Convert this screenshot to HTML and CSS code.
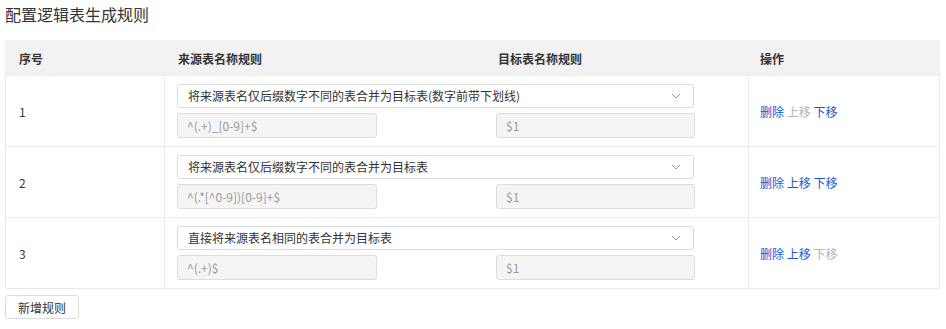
FILE: index.html
```html
<!DOCTYPE html>
<html lang="zh-CN">
<head>
<meta charset="utf-8">
<link rel="stylesheet" href="styles.css">
</head>
<body>
<div class="page">
  <h1 class="title">配置逻辑表生成规则</h1>
  <table class="rules">
    <colgroup>
      <col class="c-no"><col class="c-src"><col class="c-dst"><col class="c-op">
    </colgroup>
    <thead>
      <tr><th>序号</th><th>来源表名称规则</th><th>目标表名称规则</th><th class="h-op">操作</th></tr>
    </thead>
    <tbody>
      <tr>
        <td class="no">1</td>
        <td colspan="2" class="rule">
          <div class="select"><span>将来源表名仅后缀数字不同的表合并为目标表(数字前带下划线)</span><svg class="chev" width="10" height="6" viewBox="0 0 10 6"><path d="M1 1l4 4 4-4" fill="none" stroke="#999" stroke-width="1"/></svg></div>
          <div class="inputs"><div class="input">^(.+)_[0-9]+$</div><div class="input">$1</div></div>
        </td>
        <td class="ops"><a class="op">删除</a> <a class="op off">上移</a> <a class="op">下移</a></td>
      </tr>
      <tr>
        <td class="no">2</td>
        <td colspan="2" class="rule">
          <div class="select"><span>将来源表名仅后缀数字不同的表合并为目标表</span><svg class="chev" width="10" height="6" viewBox="0 0 10 6"><path d="M1 1l4 4 4-4" fill="none" stroke="#999" stroke-width="1"/></svg></div>
          <div class="inputs"><div class="input">^(.*[^0-9])[0-9]+$</div><div class="input">$1</div></div>
        </td>
        <td class="ops"><a class="op">删除</a> <a class="op">上移</a> <a class="op">下移</a></td>
      </tr>
      <tr>
        <td class="no">3</td>
        <td colspan="2" class="rule">
          <div class="select"><span>直接将来源表名相同的表合并为目标表</span><svg class="chev" width="10" height="6" viewBox="0 0 10 6"><path d="M1 1l4 4 4-4" fill="none" stroke="#999" stroke-width="1"/></svg></div>
          <div class="inputs"><div class="input">^(.+)$</div><div class="input">$1</div></div>
        </td>
        <td class="ops"><a class="op">删除</a> <a class="op">上移</a> <a class="op off">下移</a></td>
      </tr>
    </tbody>
  </table>
  <button class="add">新增规则</button>
</div>
</body>
</html>
```

FILE: styles.css
```css
* { box-sizing: border-box; }
html, body { margin: 0; padding: 0; background: #fff; }
body {
  font-family: "Noto Sans CJK SC", "Noto Sans", sans-serif;
  font-size: 12px;
  color: #333;
}
.page { padding: 0 5px; width: 940px; }
.title {
  margin: 0;
  padding-top: 2px;
  height: 40px;
  font-size: 16px;
  font-weight: normal;
  line-height: 24px;
  color: #333;
}
.rules {
  border-collapse: collapse;
  table-layout: fixed;
  width: 934px;
}
.c-no { width: 159px; }
.c-src { width: 320px; }
.c-dst { width: 264px; }
.c-op { width: 191px; }
.rules th {
  background: #f2f2f2;
  height: 35px;
  padding: 0 12px 0 13px;
  text-align: left;
  font-weight: bold;
  font-size: 12px;
  color: #333;
  border: 1px solid #f2f2f2;
  border-bottom-color: #ebebeb;
}
.rules th.h-op { padding-left: 11px; }
.rules td {
  border: 1px solid #ebebeb;
  padding: 8px 12px 8px 12px;
  vertical-align: middle;
  height: 71px;
}
.rules td.no { padding-left: 13px; }
.rules td.ops { padding-left: 11px; }
.select {
  height: 24px;
  width: 517px;
  border: 1px solid #dcdcdc;
  border-radius: 3px;
  background: #fff;
  display: flex;
  align-items: center;
  justify-content: space-between;
  padding: 0 12px 0 10px;
  color: #333;
  line-height: 22px;
}
.chev { display: block; }
.inputs {
  margin-top: 5px;
  display: grid;
  grid-template-columns: 319px 199px;
}
.input {
  height: 25px;
  width: 200px;
  border: 1px solid #dddddd;
  border-radius: 3px;
  background: #f5f5f5;
  color: #999;
  padding: 0 9px;
  line-height: 23px;
}
.inputs .input:last-child { width: 199px; }
.op { color: #2356d1; cursor: pointer; }
.op.off { color: #b4b4b4; }
.add {
  margin-top: 6px;
  height: 24px;
  width: 74px;
  padding: 0;
  border: 1px solid #dcdcdc;
  border-radius: 3px;
  background: #fff;
  font-family: inherit;
  font-size: 12px;
  color: #333;
}
```
